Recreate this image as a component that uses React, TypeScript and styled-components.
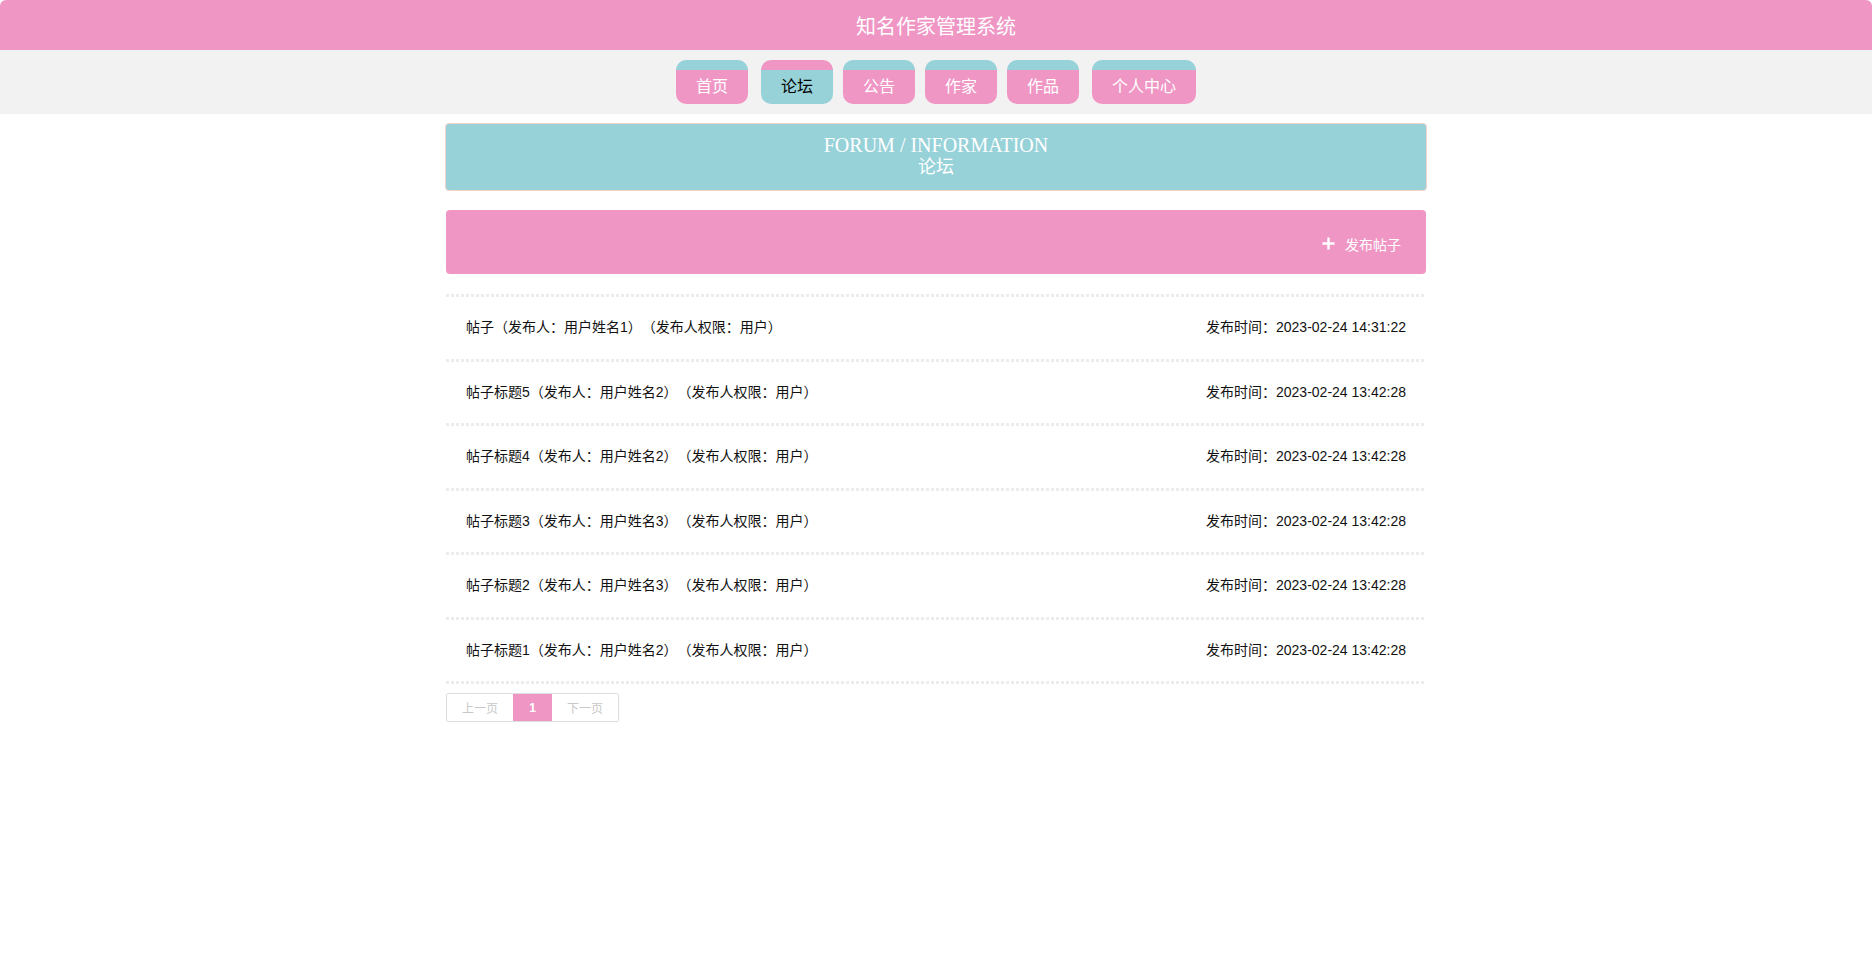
import React from "react";
import styled, { createGlobalStyle } from "styled-components";

const PINK = "#ef96c5";
const TEAL = "#97d2d9";

const GlobalStyle = createGlobalStyle`
  html, body { margin: 0; padding: 0; background: #fff; }
  body {
    font-family: "Liberation Sans", "Noto Sans CJK SC", sans-serif;
    color: #333;
    text-spacing-trim: space-all;
  }
  * { box-sizing: border-box; }
`;

const Page = styled.div`
  display: flex;
  flex-direction: column;
  min-height: 958px;
`;

const Header = styled.header`
  height: 50px;
  background: ${PINK};
  border-radius: 6px 6px 0 0;
  display: flex;
  align-items: center;
  justify-content: center;
  color: #fff;
  font-size: 20px;
  font-family: "Liberation Sans", "Noto Sans CJK SC", sans-serif;
`;

const NavBar = styled.nav`
  height: 64px;
  background: #f2f2f2;
  display: flex;
  justify-content: center;
  align-items: flex-start;
  padding-top: 10px;
  gap: 10px;
  & > :nth-child(2), & > :last-child { margin-left: 3px; }
`;

const NavItem = styled.a<{ $active?: boolean }>`
  height: 44px;
  padding: 0 20px;
  display: flex;
  align-items: center;
  justify-content: center;
  font-size: 16px;
  line-height: 16px;
  border-radius: 10px;
  border-top: 10px solid ${(p) => (p.$active ? PINK : TEAL)};
  background: ${(p) => (p.$active ? TEAL : PINK)};
  color: ${(p) => (p.$active ? "#000" : "#fff")};
  cursor: pointer;
  text-decoration: none;
`;

const Main = styled.main`
  width: 980px;
  margin: 9px auto 0;
  display: flex;
  flex-direction: column;
`;

const Banner = styled.div`
  width: 982px;
  margin-left: -1px;
  background: ${TEAL};
  border: 1px solid #f3d3c8;
  border-radius: 4px;
  padding: 10px 0 12px;
  text-align: center;
  color: #fff;
  font-family: "Liberation Serif", "Noto Sans CJK SC", serif;
  font-size: 20px;
  line-height: 22px;
`;

const BannerSub = styled.div`
  font-size: 18px;
`;

const ActionBar = styled.div`
  margin-top: 19px;
  height: 64px;
  background: ${PINK};
  border-radius: 4px;
  display: flex;
  align-items: center;
  justify-content: flex-end;
  padding: 3px 25px 0 0;
`;

const AddButton = styled.button`
  display: flex;
  align-items: center;
  gap: 10px;
  background: transparent;
  border: none;
  padding: 0;
  color: #fff;
  font-size: 14px;
  font-family: "Liberation Sans", "Noto Sans CJK SC", sans-serif;
  cursor: pointer;
`;

const List = styled.ul`
  list-style: none;
  margin: 20px 0 0;
  padding: 0;
`;

const Dots = styled.div`
  height: 3px;
  background: repeating-linear-gradient(90deg, #ececec 0 3px, transparent 3px 5px);
`;

const Row = styled.li`
  display: flex;
  justify-content: space-between;
  align-items: center;
  padding: 20px 20px;
  line-height: 21.5px;
  font-size: 14px;
  color: #111;
`;

const Pager = styled.div`
  margin-top: 9px;
  display: flex;
  align-self: flex-start;
  border: 1px solid #ddd;
  border-radius: 2px;
  overflow: hidden;
`;

const PageBtn = styled.span<{ $active?: boolean }>`
  height: 27px;
  display: flex;
  align-items: center;
  justify-content: center;
  padding: 0 ${(p) => (p.$active ? "16px" : "15px")};
  min-width: ${(p) => (p.$active ? "39px" : "66px")};
  font-size: 12px;
  font-weight: ${(p) => (p.$active ? 700 : 400)};
  color: ${(p) => (p.$active ? "#fff" : "#c8c8c8")};
  background: ${(p) => (p.$active ? PINK : "#fff")};
`;

const PlusIcon = () => (
  <svg width="13" height="13" viewBox="0 0 13 13">
    <path d="M6.5 0.5v12M0.5 6.5h12" stroke="#fff" strokeWidth="2.4" />
  </svg>
);

const navs = ["首页", "论坛", "公告", "作家", "作品", "个人中心"];

const posts = [
  { title: "帖子（发布人：用户姓名1）（发布人权限：用户）", time: "2023-02-24 14:31:22" },
  { title: "帖子标题5（发布人：用户姓名2）（发布人权限：用户）", time: "2023-02-24 13:42:28" },
  { title: "帖子标题4（发布人：用户姓名2）（发布人权限：用户）", time: "2023-02-24 13:42:28" },
  { title: "帖子标题3（发布人：用户姓名3）（发布人权限：用户）", time: "2023-02-24 13:42:28" },
  { title: "帖子标题2（发布人：用户姓名3）（发布人权限：用户）", time: "2023-02-24 13:42:28" },
  { title: "帖子标题1（发布人：用户姓名2）（发布人权限：用户）", time: "2023-02-24 13:42:28" },
];

export default function App() {
  return (
    <Page>
      <GlobalStyle />
      <Header>知名作家管理系统</Header>
      <NavBar>
        {navs.map((n) => (
          <NavItem key={n} $active={n === "论坛"}>
            {n}
          </NavItem>
        ))}
      </NavBar>
      <Main>
        <Banner>
          <div>FORUM / INFORMATION</div>
          <BannerSub>论坛</BannerSub>
        </Banner>
        <ActionBar>
          <AddButton>
            <PlusIcon />
            发布帖子
          </AddButton>
        </ActionBar>
        <List>
          <Dots />
          {posts.map((p, i) => (
            <React.Fragment key={i}>
              <Row>
                <span>{p.title}</span>
                <span>发布时间：{p.time}</span>
              </Row>
              <Dots />
            </React.Fragment>
          ))}
        </List>
        <Pager>
          <PageBtn>上一页</PageBtn>
          <PageBtn $active>1</PageBtn>
          <PageBtn>下一页</PageBtn>
        </Pager>
      </Main>
    </Page>
  );
}
